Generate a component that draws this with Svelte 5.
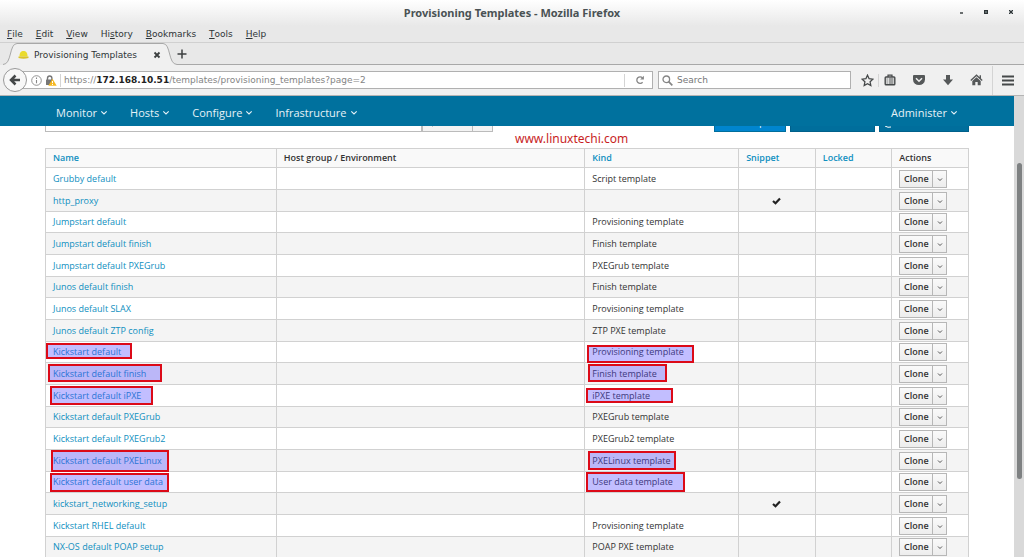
<script>
  const menus = ['File', 'Edit', 'View', 'History', 'Bookmarks', 'Tools', 'Help'];
  const keys = [0, 0, 0, 2, 0, 0, 0];
  const nav = ['Monitor', 'Hosts', 'Configure', 'Infrastructure'];

  const rows = [
    { name: 'Grubby default', kind: 'Script template' },
    { name: 'http_proxy', kind: '', snippet: true },
    { name: 'Jumpstart default', kind: 'Provisioning template' },
    { name: 'Jumpstart default finish', kind: 'Finish template' },
    { name: 'Jumpstart default PXEGrub', kind: 'PXEGrub template' },
    { name: 'Junos default finish', kind: 'Finish template' },
    { name: 'Junos default SLAX', kind: 'Provisioning template' },
    { name: 'Junos default ZTP config', kind: 'ZTP PXE template' },
    { name: 'Kickstart default', kind: 'Provisioning template', nameMark: [0, 1, 86, 16], kindMark: [2, 3, 107, 18] },
    { name: 'Kickstart default finish', kind: 'Finish template', nameMark: [2, 1, 114, 18], kindMark: [3, 1, 79, 18] },
    { name: 'Kickstart default iPXE', kind: 'iPXE template', nameMark: [4, 1, 103, 19], kindMark: [1, 3, 87, 15] },
    { name: 'Kickstart default PXEGrub', kind: 'PXEGrub template' },
    { name: 'Kickstart default PXEGrub2', kind: 'PXEGrub2 template' },
    { name: 'Kickstart default PXELinux', kind: 'PXELinux template', nameMark: [5, 0, 118, 22], kindMark: [3, 1, 88, 19] },
    { name: 'Kickstart default user data', kind: 'User data template', nameMark: [4, 1, 119, 19], kindMark: [1, 0, 99, 20] },
    { name: 'kickstart_networking_setup', kind: '', snippet: true },
    { name: 'Kickstart RHEL default', kind: 'Provisioning template' },
    { name: 'NX-OS default POAP setup', kind: 'POAP PXE template' }
  ];
</script>

{#snippet chevron(size)}
  <svg class="chev" width={size} height={size} viewBox="0 0 8 8" aria-hidden="true"><path d="M1.300 3.300 4 6 6.700 3.300" fill="none" stroke="currentColor" stroke-width="1.100" /></svg>
{/snippet}

{#snippet mark(m)}
  <span class="mark" style="left:{m[0]}px;top:{m[1]}px;width:{m[2]}px;height:{m[3]}px"></span>
{/snippet}

<div class="window">
  <header class="chrome">
    <div class="titlebar">
      <span class="title">Provisioning Templates - Mozilla Firefox</span>
      <div class="winbtns">
        <button aria-label="Minimize"><svg width="6" height="6"><path d="M2 4h3" stroke="#2e3436" stroke-width="1.4" /></svg></button>
        <button aria-label="Maximize"><svg width="6" height="6"><rect x="1" y="1" width="4" height="4" fill="#2e3436" /><path d="M2 3h2" stroke="#9aa" /></svg></button>
        <button aria-label="Close"><svg width="6" height="6"><rect x="1" y="1" width="4" height="4" fill="#9aa0a2" /><path d="M1 1 5 5M5 1 1 5" stroke="#2e3436" /></svg></button>
      </div>
    </div>

    <nav class="menubar" aria-label="Application menu">
      {#each menus as m, i}
        <button>{m.slice(0, keys[i])}<u>{m[keys[i]]}</u>{m.slice(keys[i] + 1)}</button>
      {/each}
    </nav>

    <div class="tabs">
      <svg class="edge" width="14" height="22" viewBox="0 0 14 22" aria-hidden="true"><path d="M0 21.5C9 21.5 6 .5 14 .5V22H0Z" fill="#f0f0f0" /><path d="M0 21.5C9 21.5 6 .5 14 .5" fill="none" stroke="#a8a8a8" /></svg>
      <div class="tab">
        <svg width="11" height="10" viewBox="0 0 11 10" aria-hidden="true"><path d="M1.500 6.500C1.500 2.500 3 1 5.500 1S9.500 2.500 9.500 6.500Z" fill="#eadb2c" /><path d="M.500 6.500h10v1.500q-5 1.500-10 0Z" fill="#d9c22b" /></svg>
        <span>Provisioning Templates</span>
        <button aria-label="Close tab"><svg width="8" height="8" viewBox="0 0 8 8"><path d="M1.500 1.500 6.500 6.500M6.500 1.500 1.500 6.500" stroke="#3c3f40" stroke-width="1.800" /></svg></button>
      </div>
      <svg class="edge" width="14" height="22" viewBox="0 0 14 22" aria-hidden="true"><path d="M14 21.5C5 21.5 8 .5 0 .5V22H14Z" fill="#f0f0f0" /><path d="M14 21.5C5 21.5 8 .5 0 .5" fill="none" stroke="#a8a8a8" /></svg>
      <div class="strip">
        <button aria-label="New tab"><svg width="10" height="10" viewBox="0 0 10 10"><path d="M5 .5v9M.5 5h9" stroke="#3c3f40" stroke-width="1.500" /></svg></button>
      </div>
    </div>

    <div class="navbar">
      <button class="back" aria-label="Back"><svg width="12" height="12" viewBox="0 0 12 12"><path d="M6.500 1.500 2 6l4.500 4.500M2.500 6H11" fill="none" stroke="#454849" stroke-width="2.500" /></svg></button>
      <div class="urlbar">
        <svg width="11" height="11" viewBox="0 0 11 11" aria-hidden="true"><circle cx="5.500" cy="5.500" r="4.800" fill="none" stroke="#888" stroke-width=".9" /><path d="M5.500 5v3.200M5.500 2.600v1.300" stroke="#888" stroke-width="1.100" /></svg>
        <svg width="12" height="11" viewBox="0 0 12 11" aria-hidden="true"><path d="M2.500 5V3.200a2.200 2.200 0 0 1 4.400 0V5" fill="none" stroke="#777" stroke-width="1.400" /><rect x="1" y="4.500" width="7" height="5.500" rx=".6" fill="#777" /><path d="M7.500 3.800 11.700 10.700H3.300Z" fill="#f6b820" /><path d="M7.500 6v2.200M7.500 9v1" stroke="#fff" stroke-width="1" /></svg>
        <i class="sep"></i>
        <span class="url">https://<b>172.168.10.51</b>/templates/provisioning_templates?page=2</span>
        <i class="sep"></i>
        <button class="reload" aria-label="Reload"><svg width="10" height="10" viewBox="0 0 10 10"><path d="M7.600 7.300A3.300 3.300 0 1 1 7.500 2.800" fill="none" stroke="#858585" stroke-width="1.300" /><path d="M8.900 .800V4.600H5.200Z" fill="#858585" /></svg></button>
      </div>
      <label class="search">
        <svg width="11" height="11" viewBox="0 0 11 11" aria-hidden="true"><circle cx="4.300" cy="4.300" r="3.300" fill="none" stroke="#858585" stroke-width="1.300" /><path d="M6.700 6.700 10.300 10.300" stroke="#858585" stroke-width="1.700" /></svg>
        <input placeholder="Search" aria-label="Search the web" />
      </label>
      <div class="tools">
        <button aria-label="Bookmark"><svg width="13" height="13" viewBox="0 0 13 13"><path d="M6.500 1.200 8.100 4.700 11.900 5.200 9.100 7.800 9.800 11.600 6.500 9.700 3.200 11.600 3.900 7.800 1.100 5.200 4.900 4.700Z" fill="none" stroke="#454849" stroke-width="1.300" /></svg></button>
        <i class="sep"></i>
        <button aria-label="Library"><svg width="12" height="12" viewBox="0 0 12 12"><path d="M4 3V1.200h4V3" fill="none" stroke="#454849" stroke-width="1.200" /><rect x="1.200" y="3" width="9.600" height="7.800" rx=".8" fill="#f6f6f6" stroke="#454849" stroke-width="1.400" /><path d="M2.500 5h1.200M4.700 5H9.500M2.500 7h1.200M4.700 7H9.500M2.500 9h1.200M4.700 9H9.500" stroke="#454849" /></svg></button>
        <button aria-label="Pocket"><svg width="14" height="12" viewBox="0 0 14 12"><path d="M2 1h10q1 0 1 1v3.500a6 5.500 0 0 1-12 0V2q0-1 1-1Z" fill="#555859" /><path d="M4 4.300 7 7.200 10 4.300" fill="none" stroke="#f0f0f0" stroke-width="1.500" /></svg></button>
        <button aria-label="Downloads"><svg width="12" height="12" viewBox="0 0 12 12"><path d="M4 1h4v4.500h3L6 11.200 1 5.500h3Z" fill="#555859" /></svg></button>
        <button aria-label="Home"><svg width="13" height="12" viewBox="0 0 13 12"><path d="M.8 6.500 6.500 1.200 12.200 6.500M10.300 1.200v3" fill="none" stroke="#555859" stroke-width="1.400" /><path d="M2.300 7 6.500 3.200 10.700 7v4.200H7.700V8H5.300v3.200H2.300Z" fill="#555859" /></svg></button>
        <i class="sep tall"></i>
        <button aria-label="Open menu"><svg width="12" height="11" viewBox="0 0 12 11"><path d="M0 1.500h12M0 5.500h12M0 9.500h12" stroke="#454849" stroke-width="2" /></svg></button>
      </div>
    </div>
  </header>

  <div class="viewport">
    <main class="page">
      <nav class="topnav" aria-label="Main">
        {#each nav as n}
          <button>{n}{@render chevron(8)}</button>
        {/each}
        <button class="admin">Administer{@render chevron(8)}</button>
      </nav>

      <div class="content">
        <div class="toolbar">
          <input class="filter" aria-label="Filter" />
          <button class="grey" aria-label="Search"><svg width="10" height="12" viewBox="0 0 10 12" aria-hidden="true"><circle cx="6" cy="5" r="3" fill="none" stroke="currentColor" /><path d="M4 7 1 11" stroke="currentColor" stroke-width="1.400" /></svg></button>
          <button class="grey drop" aria-label="Saved searches">{@render chevron(6)}</button>
          <span class="fill"></span>
          <button class="blue light">New Template</button>
          <button class="blue" aria-label="Build default"></button>
          <button class="blue docs" aria-label="Documentation"><svg width="9" height="18" viewBox="0 0 9 18"><path d="M1 1v14q3 2 6 1" fill="none" stroke="#fff" /></svg></button>
        </div>
        <p class="watermark">www.linuxtechi.com</p>

        <table>
          <colgroup><col class="c3" /><col class="c4" /><col class="c2" /><col class="c1" /><col class="c1" /><col class="c1" /></colgroup>
          <thead>
            <tr>
              <th><a href="#name">Name</a></th>
              <th>Host group / Environment</th>
              <th><a href="#kind">Kind</a></th>
              <th><a href="#snippet">Snippet</a></th>
              <th><a href="#locked">Locked</a></th>
              <th>Actions</th>
            </tr>
          </thead>
          <tbody>
            {#each rows as r}
              <tr>
                <td><a href="#template">{r.name}</a>{#if r.nameMark}{@render mark(r.nameMark)}{/if}</td>
                <td></td>
                <td>{r.kind}{#if r.kindMark}{@render mark(r.kindMark)}{/if}</td>
                <td class="center">
                  {#if r.snippet}<svg width="9" height="8" viewBox="0 0 9 8" role="img" aria-label="Yes"><path d="M1 4 3.500 6.300 8 1.500" fill="none" stroke="#222" stroke-width="2.200" /></svg>{/if}
                </td>
                <td></td>
                <td><div class="split"><button>Clone</button><button class="more" aria-label="More actions">{@render chevron(6)}</button></div></td>
              </tr>
            {/each}
          </tbody>
        </table>
      </div>
    </main>
    <div class="scrollbar"><span></span></div>
  </div>
</div>

<style>
  :global(body) { margin: 0; background: #fff; }
  .window {
    height: 100vh; overflow: hidden; display: flex; flex-direction: column;
    font-family: "DejaVu Sans", sans-serif; font-size: 9px; color: #333;
  }
  button { border: 0; padding: 0; margin: 0; background: none; font: inherit; color: inherit; display: flex; align-items: center; }
  input { font: inherit; min-width: 0; box-sizing: border-box; }
  svg { display: block; flex: none; }
  a { color: #0f8fc0; text-decoration: none; }

  .chrome { flex: none; background: #e8e8e8; color: #2e3436; }
  .titlebar { height: 26px; display: flex; align-items: center; justify-content: center; position: relative; background: linear-gradient(#fff, #e8e8e8); }
  .title { font: 700 11px/14px "Noto Sans", sans-serif; color: #4a5254; }
  .winbtns { position: absolute; right: 10px; top: 9px; display: flex; gap: 19px; }
  .menubar { height: 16px; display: flex; align-items: center; gap: 13px; padding-left: 7px; border-bottom: 1px solid #d0d0d0; }
  .menubar u { text-underline-offset: 1px; }
  .tabs { height: 22px; display: flex; }
  .tabs > .edge:first-child { margin-left: 3px; }
  .tab { display: flex; align-items: center; width: 146px; box-sizing: border-box; padding: 0 2px 0 1px; gap: 5px; background: #f0f0f0; border-top: 1px solid #a8a8a8; }
  .tab span { flex: 1; white-space: nowrap; }
  .strip { flex: 1; display: flex; align-items: center; border-bottom: 1px solid #a8a8a8; }
  .navbar { height: 30px; display: flex; align-items: center; background: #f0f0f0; border-bottom: 1px solid #b4b4b4; padding: 0 10px 0 3px; }
  .back { width: 24px; height: 24px; box-sizing: border-box; flex: none; justify-content: center; border: 1px solid #999; border-radius: 50%; background: #f7f7f7; z-index: 1; }
  .urlbar { flex: 1; height: 18px; box-sizing: border-box; margin-left: -4px; display: flex; align-items: center; gap: 3px; padding-left: 7px; background: #fff; border: 1px solid #b0b0b0; }
  .url { flex: 1; color: #858585; white-space: nowrap; }
  .url b { color: #222; }
  .sep { width: 1px; height: 13px; background: #d4d4d4; }
  .sep.tall { height: 29px; }
  .reload { width: 24px; justify-content: center; }
  .search { width: 193px; height: 18px; box-sizing: border-box; margin: 0 10px 0 5px; display: flex; align-items: center; gap: 4px; padding: 0 3px; background: #fff; border: 1px solid #b0b0b0; }
  .search input { border: 0; padding: 0; flex: 1; outline: 0; background: none; }
  .search input::placeholder { color: #777; opacity: 1; }
  .tools { display: flex; align-items: center; gap: 16px; }
  .tools > .sep:nth-child(2) { margin: 0 -11px 0 -12px; }
  .tools > .tall { margin: 0 -7px; }

  .viewport { flex: 1; min-height: 0; display: flex; font-family: "Open Sans", sans-serif; }
  .page { flex: 1; min-width: 0; overflow: hidden; background: #fff; }
  .topnav { position: relative; z-index: 2; height: 30px; display: flex; align-items: center; gap: 22px; padding: 2px 56px 0; box-sizing: border-box; background: #00719e; color: #e6f2f7; font-size: 11px; }
  .topnav button { gap: 3px; }
  .topnav .admin { margin-left: auto; }
  .content { padding: 0 45px; margin-top: -18px; position: relative; }
  .toolbar { height: 24px; display: flex; }
  .filter { width: 377px; border: 1px solid #bbb; }
  .grey { width: 51px; padding: 1px 0 0 8px; background: #f3f3f3; border: 1px solid #bbb; box-sizing: border-box; }
  .grey.drop { width: 20px; padding: 0; justify-content: center; border-left: 0; }
  .fill { flex: 1; }
  .blue { width: 85px; padding: 0 4px; margin-left: 4px; justify-content: center; box-sizing: border-box; background: #006e9c; border: 1px solid #00608a; color: #fff; white-space: nowrap; }
  .blue.light { width: 72px; padding-top: 4px; background: #0085cf; border-color: #006e9c; }
  .blue.docs { width: 90px; justify-content: flex-start; }
  .watermark { position: absolute; left: 515px; top: 23px; margin: 0; font: 12px/16px "Noto Sans", sans-serif; color: #c81e1e; }

  table { width: 100%; margin-top: 16px; table-layout: fixed; border-collapse: separate; border-spacing: 0; border-left: 1px solid #d1d1d1; border-top: 1px solid #d1d1d1; }
  .c4 { width: 33.42%; } .c3 { width: 25%; } .c2 { width: 16.67%; } .c1 { width: 8.3%; }
  th, td { position: relative; box-sizing: border-box; padding: 0 7px; border-right: 1px solid #d1d1d1; border-bottom: 1px solid #d1d1d1; text-align: left; line-height: 14px; vertical-align: middle; white-space: nowrap; }
  th { height: 19px; background: #f9f9f9; font-weight: 600; }
  td { height: 22px; }
  tr:nth-child(3n) td { height: 21px; }
  tbody tr:nth-child(even) { background: #f4f4f4; }
  .center svg { margin: 0 auto; }
  .split { display: flex; width: 48px; height: 18px; box-sizing: border-box; border: 1px solid #b7b7b7; background: linear-gradient(#fafafa, #ededed); }
  .split button { flex: 1; justify-content: center; font-weight: 600; line-height: 14px; }
  .split .more { flex: none; width: 14px; border-left: 1px solid #b7b7b7; }
  .mark { position: absolute; box-sizing: border-box; border: 2px solid #dc0a18; background: rgba(80, 70, 255, .35); pointer-events: none; }

  .scrollbar { width: 10px; background: #d9d9d9; position: relative; }
  .scrollbar span { position: absolute; left: 3px; right: 2px; top: 14.5%; height: 68.5%; border-radius: 3px; background: #7e8182; }
</style>
